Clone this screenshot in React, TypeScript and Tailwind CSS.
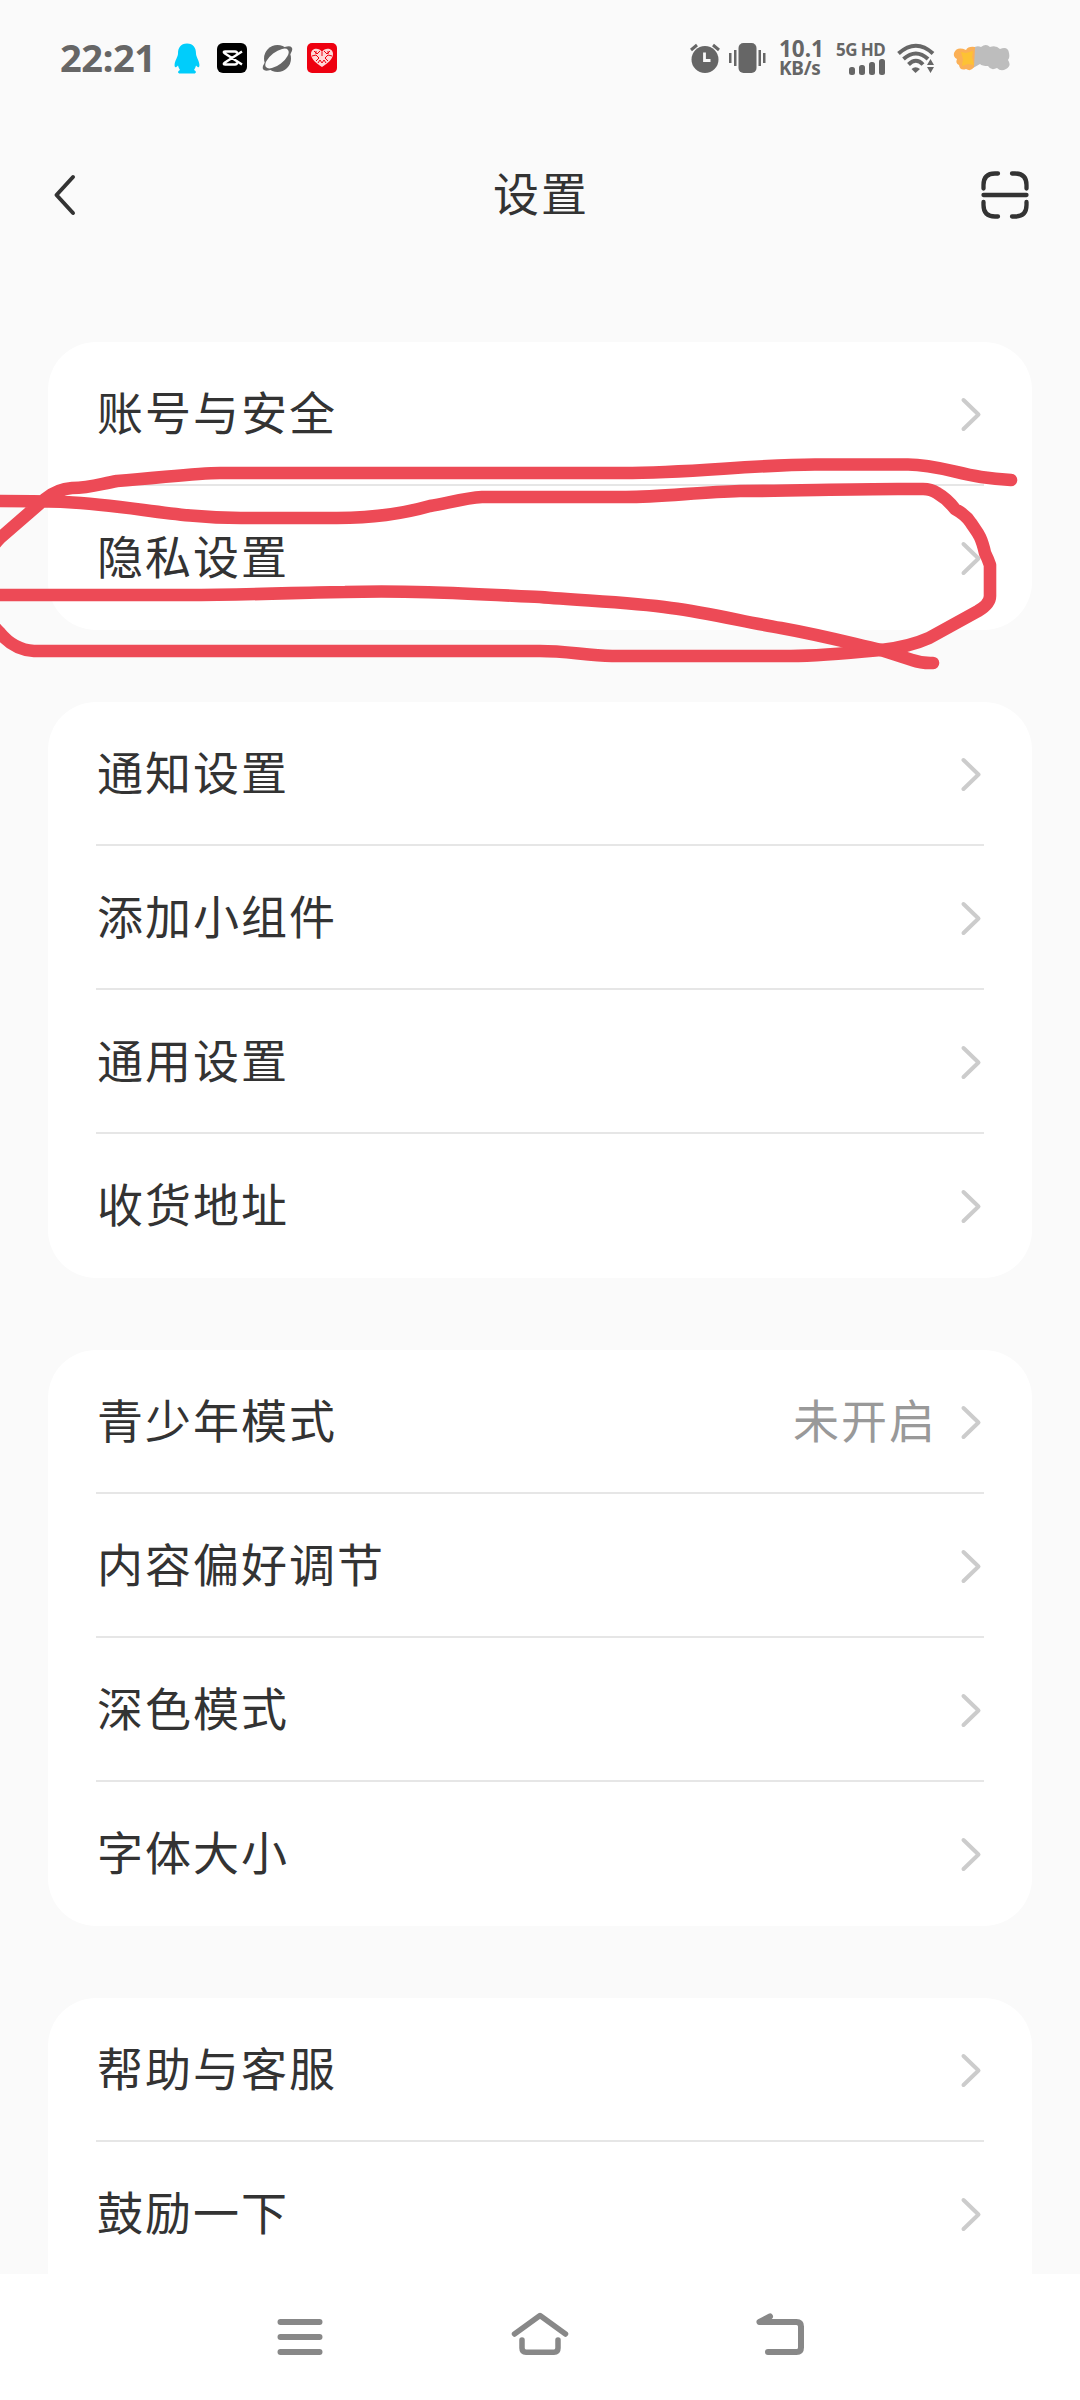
import React from "react";

type Row = { label: string; value?: string };

const groups: Row[][] = [
  [{ label: "账号与安全" }, { label: "隐私设置" }],
  [{ label: "通知设置" }, { label: "添加小组件" }, { label: "通用设置" }, { label: "收货地址" }],
  [{ label: "青少年模式", value: "未开启" }, { label: "内容偏好调节" }, { label: "深色模式" }, { label: "字体大小" }],
  [{ label: "帮助与客服" }, { label: "鼓励一下" }],
];

function StatusBar() {
  return (
    <div className="flex h-[116px] items-center justify-between pl-[60px] pr-[70px] text-[#666666]">
      <div className="flex items-center">
        <span className="w-[112px] pb-[2px] whitespace-nowrap font-['Noto_Sans'] text-[38px] leading-none font-bold tracking-[-0.4px]">22:21</span>
        <svg className="ml-[2px] h-[31px] w-[26px]" viewBox="0 0 26 31" fill="#00cdfb">
          <path d="M13 0.5C6.500 0.500 4 5 4 10.500C4 14 1 17 .6 21.500C.4 24.500 1.500 25.500 4 22.500C4.500 25 5.500 26 6 27C3.500 28 3.500 30.500 6 30.500H20C22.500 30.500 22.500 28 20 27C20.500 26 21.500 25 22 22.500C24.500 25.500 25.600 24.500 25.400 21.500C25 17 22 14 22 10.500C22 5 19.500 .5 13 .5Z" />
        </svg>
        <svg className="ml-[17px] h-[30px] w-[30px]" viewBox="0 0 30 30">
          <rect width="30" height="30" rx="6" fill="#000" />
          <path d="M25 8.500L8 19.500Q5.500 21.500 8 21.500H18Q20 21.500 20 19.500M25 21.500L8 10.500Q5.500 8.500 8 8.500H18Q20 8.500 20 10.500" fill="none" stroke="#fff" strokeWidth="2.400" />
        </svg>
        <svg className="ml-[15px] h-[30px] w-[31px]" viewBox="0 0 31 30">
          <circle cx="15.500" cy="15.500" r="13.500" fill="#666" />
          <ellipse cx="15.500" cy="15.500" rx="18" ry="6.500" transform="rotate(-38 15.500 15.500)" fill="#666" />
          <ellipse cx="15" cy="15.500" rx="14" ry="6.300" transform="rotate(-38 15 15.500)" fill="#fafafa" />
        </svg>
        <svg className="ml-[14px] h-[30px] w-[30px]" viewBox="0 0 30 30">
          <rect width="30" height="30" rx="5" fill="#ee0010" />
          <path d="M15 24C9 20 4 16 4 11C4 5 12 4 15 9C18 4 26 5 26 11C26 16 21 20 15 24Z" fill="#ffd9d9" />
          <path d="M7 8l3 3l3-3M5 13l4-1l3 3l-3 3M11 20l2-3l2 3l2-3l2 3M23 8l-3 3l-3-3M25 13l-4-1l-3 3l3 3M15 9v4M9 8v3M21 8v3" fill="none" stroke="#ee0010" strokeWidth="1" />
        </svg>
      </div>
      <div className="flex items-center">
        <svg className="h-[30px] w-[30px]" viewBox="0 0 30 30">
          <circle cx="15" cy="16.500" r="13.500" fill="#666" />
          <path d="M1 7L7 2M29 7L23 2" stroke="#666" strokeWidth="3" />
          <path d="M14.500 9.500V17.500H20.500" fill="none" stroke="#fafafa" strokeWidth="2.800" />
        </svg>
        <svg className="ml-[9px] h-[30px] w-[37px]" viewBox="0 0 37 30" fill="#666">
          <rect x="9.500" width="18" height="30" rx="5" />
          <path d="M0 10h2.500v10H0zM5 7h2.500v16H5zM29.500 7H32v16h-2.500zM34 10h2.500v10H34z" />
        </svg>
        <div className="ml-[13px] flex w-[45px] flex-col whitespace-nowrap font-['Noto_Sans'] font-bold">
          <span className="text-[22.500px] leading-[20px]">10.1</span>
          <span className="text-[19px] leading-[19px] tracking-[-0.3px]">KB/s</span>
        </div>
        <div className="ml-[8px] flex w-[53px] flex-col items-end gap-[2px] whitespace-nowrap font-['Noto_Sans'] text-[17px] leading-[15px] font-bold tracking-[-0.6px]">
          <span>5G HD</span>
          <svg className="h-[16px] w-[36px]" viewBox="0 0 36 16" fill="#666">
            <rect x="0" y="8" width="6" height="8" rx="2.500" />
            <rect x="10" y="6" width="6" height="10" rx="2.500" />
            <rect x="20" y="3" width="6" height="13" rx="2.500" />
            <rect x="30" y="0" width="6" height="16" rx="2.500" />
          </svg>
        </div>
        <svg className="ml-[12px] h-[30px] w-[38px]" viewBox="0 0 38 30">
          <path d="M1.500 10.500Q19 -5 36 10.500M6.500 16Q19 5 31 16M11.500 21.500Q19 14 26 21.500" fill="none" stroke="#666" strokeWidth="4" />
          <path d="M14.500 26Q18.500 22.500 23 26L18.500 30ZM30 22L33.500 16L37 22ZM30 24L33.500 30L37 24Z" fill="#666" />
        </svg>
        <svg className="ml-[18px] h-[28px] w-[57px]" viewBox="0 0 57 28">
          <path d="M20 4Q24 1 28 3Q33 -1 37 3Q43 1 47 5Q55 2 56 9Q57 14 55 16Q59 22 53 25Q48 28 44 24Q38 27 35 22Q29 22 27 20L20 24Z" fill="#bdbdbd" />
          <path d="M22 3Q15 2 13 6Q4 2 1 9Q0 13 4 15Q2 19 6 21Q7 27 13 25Q18 28 21 23Z" fill="#fbb056" />
          <path d="M8 8l5 1l7-2l-1 6l2 8l-6-1l-6 2l1-7z" fill="#fdc234" />
        </svg>
      </div>
    </div>
  );
}

function Header() {
  return (
    <header className="flex h-[158px] items-center justify-between pr-[50px] pl-[50px]">
      <svg className="h-[50px] w-[50px]" viewBox="0 0 50 50" fill="none" stroke="#333" strokeWidth="4" strokeLinecap="round" strokeLinejoin="round">
        <path d="M23 7L6.500 25L23 43" />
      </svg>
      <h1 className="pb-[8px] pl-[2px] text-[46px] leading-none tracking-[2px] text-[#333]">设置</h1>
      <svg className="h-[50px] w-[50px]" viewBox="0 0 50 50" fill="none" stroke="#333" strokeWidth="4.300" strokeLinecap="round">
        <path d="M18 3.500H15Q3.500 3.500 3.500 15V18.500M32 3.500H35Q46.500 3.500 46.500 15V18.500M18 46.500H15Q3.500 46.500 3.500 35V32M32 46.500H35Q46.500 46.500 46.500 35V32M3.500 25H46.500" />
      </svg>
    </header>
  );
}

function SettingRow({ row, divided }: { row: Row; divided: boolean }) {
  return (
    <div className={divided ? "flex h-[144px] items-center border-b-2 border-[#e6e6e6] pt-[2px]" : "flex h-[144px] items-center"}>
      <span className="flex-1 pb-[8px] pl-[1px] text-[#333]">{row.label}</span>
      {row.value && <span className="mr-[23px] pb-[8px] text-[#999]">{row.value}</span>}
      <svg className="mr-[2px] h-[36px] w-[22px]" viewBox="0 0 22 36" fill="none" stroke="#ccc" strokeWidth="4" strokeLinecap="round" strokeLinejoin="round">
        <path d="M3.500 4L18.500 18.500L3.500 33" />
      </svg>
    </div>
  );
}

function Scribble() {
  return (
    <svg className="pointer-events-none absolute top-0 left-0 h-[720px] w-[1080px]" viewBox="0 0 1080 720" fill="none" stroke="#ed4a56" strokeWidth="12.600" strokeLinecap="round" strokeLinejoin="round">
      <path d="M1011 480Q995 479 981 477C955 473 935 464.500 908 464.500H815C750 465 690 473 623 473H220C195 473 160 478 117 481C100 484 90 488 72 488Q57 489 45 499L0 538C-24 562 -25 610 0 633Q14 650 34 651H540C565 651 585 655 612 656H791C820 656 850 653 881 650Q909 647 929 638L978 611Q990 604 990 596V565Q988 559 985 553C981 535 977 532 971 523Q966 515 955 509C948 500 944 497 937 493Q931 489 923 489H898C840 489 795 491 740 491C700 492 660 497 626 497H482C465 498 448 503 430 506C402 514 370 518 337 518H241C175 518 130 505 65 502Q50 501 0 501" />
      <path d="M0 595H186C255 595 310 592 345 592C410 590 475 594 540 597C585 601 630 602 671 608C710 613 745 622 781 628C825 636 850 643 881 650L912 660Q922 663.500 933 663" />
    </svg>
  );
}

function NavBar() {
  return (
    <nav className="absolute bottom-0 left-0 flex h-[126px] w-full items-center justify-center gap-[180px] bg-white pb-[6px]">
      <svg className="h-[60px] w-[60px]" viewBox="0 0 60 60" fill="none" stroke="#888" strokeWidth="6" strokeLinecap="round">
        <path d="M10.500 18H49.500M10.500 33H49.500M10.500 48H49.500" />
      </svg>
      <svg className="h-[60px] w-[60px]" viewBox="0 0 60 60" fill="none" stroke="#888" strokeWidth="5.500" strokeLinecap="round" strokeLinejoin="round">
        <path d="M4.500 30L30 11.500L55.500 30M12 36V44Q12 48.200 16 48.200H44Q48 48.200 48 44V36" />
      </svg>
      <svg className="h-[60px] w-[60px]" viewBox="0 0 60 60" fill="none" stroke="#888" strokeWidth="6" strokeLinecap="round" strokeLinejoin="round">
        <path d="M20 12.500L9.500 18H46.500Q51 18 51 22.500V43.500Q51 48 46.500 48H18" />
      </svg>
    </nav>
  );
}

export default function App() {
  return (
    <div className="relative h-[2400px] w-[1080px] overflow-hidden bg-[#fafafa] font-['Noto_Sans_CJK_SC',sans-serif]">
      <StatusBar />
      <Header />
      <main className="flex flex-col gap-[72px] px-[48px] pt-[68px] text-[46px] leading-none tracking-[2px]">
        {groups.map((rows, g) => (
          <section key={g} className={g === 3 ? "rounded-t-[48px] bg-white px-[48px] pb-[80px]" : "rounded-[48px] bg-white px-[48px]"}>
            {rows.map((row, i) => (
              <SettingRow key={row.label} row={row} divided={i < rows.length - 1} />
            ))}
          </section>
        ))}
      </main>
      <Scribble />
      <NavBar />
    </div>
  );
}
